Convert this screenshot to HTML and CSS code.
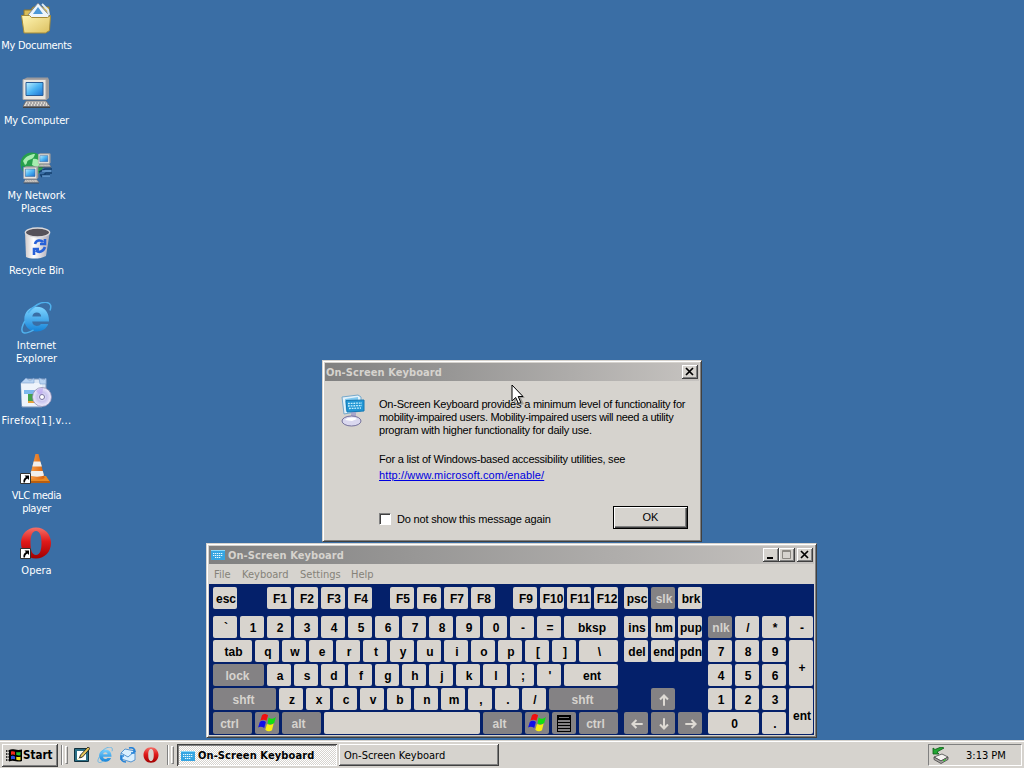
FILE: index.html
```html
<!DOCTYPE html>
<html lang="en">
<head>
<meta charset="utf-8">
<title>Desktop</title>
<link rel="stylesheet" href="styles.css">
</head>
<body>
<svg width="0" height="0" class="defs" aria-hidden="true">
  <defs>
    <linearGradient id="folder" x1="0" y1="0" x2="1" y2="1"><stop offset="0" stop-color="#fff6b4"/><stop offset="1" stop-color="#dcc060"/></linearGradient>
    <linearGradient id="screen" x1="0" y1="0" x2="1" y2="1"><stop offset="0" stop-color="#bff0ff"/><stop offset=".5" stop-color="#4cb4f4"/><stop offset="1" stop-color="#1c6fd0"/></linearGradient>
    <linearGradient id="bin" x1="0" x2="1"><stop offset="0" stop-color="#cfc8c8"/><stop offset=".35" stop-color="#ffffff"/><stop offset="1" stop-color="#a9a6b4"/></linearGradient>
    <linearGradient id="ie" x1="0" y1="0" x2="0" y2="1"><stop offset="0" stop-color="#7fd4ff"/><stop offset="1" stop-color="#1583d8"/></linearGradient>
    <linearGradient id="opera" x1="0" y1="0" x2="0" y2="1"><stop offset="0" stop-color="#f47068"/><stop offset=".45" stop-color="#e01a1a"/><stop offset="1" stop-color="#a00000"/></linearGradient>
    <linearGradient id="cone" x1="0" x2="1"><stop offset="0" stop-color="#f9a04a"/><stop offset="1" stop-color="#d8600a"/></linearGradient>
    <radialGradient id="disc"><stop offset="0" stop-color="#fff"/><stop offset=".5" stop-color="#c9c4ee"/><stop offset="1" stop-color="#f1eefc"/></radialGradient>
    <symbol id="i-ie" viewBox="0 0 32 32">
      <path d="M29 19.500H12.200c.3 2.900 2 4.400 4.600 4.400 1.900 0 3.300-.8 4.100-2h7.300C26.500 26.500 22.300 29.400 16.600 29.400 9.300 29.400 4.300 24.500 4.300 17.200S9.500 4.800 16.800 4.800c8 0 12.500 6 12.200 14.700zM12.300 14.500h8.900c-.3-2.600-1.900-4-4.400-4s-4.100 1.500-4.500 4z" fill="url(#ie)"/>
      <path d="M8 11c5-7 13-11.500 19-10.500 4 .8 4.500 4 3 8M5 19C.8 26 1 30.500 4.500 31c2.500.4 6-1.500 9-3" fill="none" stroke="#4fb0ec" stroke-width="1.500"/>
    </symbol>
    <symbol id="i-opera" viewBox="0 0 32 32">
      <path d="M16 .500C7 .500 1 7.500 1 16S7 31.500 16 31.500 31 24.500 31 16 25 .500 16 .500zm0 3.500c4 0 5.500 5 5.500 12S20 28 16 28 10.500 23 10.500 16 12 4 16 4z" fill="url(#opera)" fill-rule="evenodd"/>
    </symbol>
    <symbol id="i-pc" viewBox="0 0 32 32">
      <path d="M4 2l3-1.500h21L29 3v18l-2.500 2H4z" fill="#9c9a9c"/>
      <path d="M3 2.500h23v20H3z" fill="#e9e6e1" stroke="#aaa6a6"/>
      <path d="M6 5.500h17v13H6z" fill="url(#screen)" stroke="#2a5c96"/>
      <path d="M6 24h20l4 5.500H3z" fill="#dedad4" stroke="#6f6d70"/>
      <path d="M7 26h19M6 28h22" stroke="#77757a" stroke-dasharray="2 1"/>
      <path d="M3 30.500h27" stroke="#444"/>
    </symbol>
    <symbol id="i-osk" viewBox="0 0 14 12">
      <path d="M0 1h14v10H0z" fill="#36a5e2"/><path d="M0 1h14v1H0z" fill="#8ad8fa"/>
      <path d="M2 4.500h10M2 6.500h10M4 8.500h6" stroke="#e6faff" stroke-dasharray="1.300 .7"/>
    </symbol>
    <symbol id="i-flag" viewBox="0 0 18 18">
      <path d="M4.500 2c2-2 4-1 5.500 0L8.500 7C7 6 5 5.500 3 7z" fill="#f01010"/>
      <path d="M10.500 4c2 1.500 4 1.500 6.500-.5L15.500 9c-2 1.500-4 1.500-6 .5z" fill="#10e010"/>
      <path d="M2.500 8c2-1.500 4-1 5.500 0L6.500 13.500C5 12.500 3 12 1 13z" fill="#1010e8"/>
      <path d="M9 10c2 1 4 1 6-.5L13.500 15.500c-2 1.500-4 1-6-.5z" fill="#f8f010"/>
    </symbol>
    <symbol id="i-short" viewBox="0 0 11 11">
      <path d="M.5.500h10v10H.5z" fill="#fff" stroke="#333"/>
      <path d="M4.500 2.500H9V7L7.500 5.500C5.500 6.500 5 7.500 5 9.500H3.500C3 7 4 5 6 4z" fill="#000"/>
    </symbol>
    <symbol id="i-arrow" viewBox="0 0 14 14">
      <path d="M7 12V3M3.500 6.500L7 3l3.500 3.500" fill="none" stroke="#dedad4" stroke-width="1.800"/>
    </symbol>
  </defs>
</svg>

<main class="desktop">
  <div class="shortcuts">
    <div class="shortcut"><svg class="pic" viewBox="0 0 32 32">
      <path d="M4 8h7l2-3h16v20H4z" fill="#d9bd58" stroke="#91762a"/>
      <path d="M8 13L18 1l11 12v7H8z" fill="#eef5fb" stroke="#7b8794"/><path d="M13 12l5-7 5 7z" fill="#4c98d8"/><path d="M22 2l6 6 1 5" fill="none" stroke="#dce9f4" stroke-width="2"/>
      <path d="M1.500 13.500h8l2 2h16l3-2-1 15-4 2.500H4z" fill="url(#folder)" stroke="#a58b38"/></svg>
      <span class="l-docs">My Documents</span></div>
    <div class="shortcut"><svg class="pic"><use href="#i-pc"/></svg><span class="l-comp">My Computer</span></div>
    <div class="shortcut"><svg class="pic" viewBox="0 0 32 32">
      <circle cx="12" cy="12" r="11.500" fill="#27a04c"/><path d="M3 9c3-5 8-7 12-7-1 4-3 5-6 6s-1 4-4 5zM13 7c4-1 5 2 8 2l-3 7-6-3z" fill="#a6edb0"/><path d="M2 14l6 3-1 4-4-3z" fill="#1f62b8"/>
      <svg x="17" y="0" width="15" height="17"><use href="#i-pc"/></svg>
      <svg x="2" y="14" width="18" height="18"><use href="#i-pc"/></svg>
      <path d="M19 20l6-3h7M21 25l5-4h6M20 23h10" stroke="#15406f" stroke-width="1.500" fill="none"/><path d="M22 19h9M22 24h8" stroke="#7fb4e8"/></svg>
      <span class="l-net">My Network<br>Places</span></div>
    <div class="shortcut"><svg class="pic" viewBox="0 0 32 32">
      <path d="M5 5l1 25c5 2.500 15 2 20-1l4-25z" fill="url(#bin)"/>
      <ellipse cx="17.500" cy="5.500" rx="12.200" ry="4.500" fill="#56525a" stroke="#dcdadc" stroke-width="1.300"/>
      <path d="M15 17c1-4 6-4.500 8-2M25 12v5h-5M25 20c-2 5-6 6-9 3.500M14 28v-6h5" fill="none" stroke="#2761d8" stroke-width="2.600"/></svg>
      <span class="l-bin">Recycle Bin</span></div>
    <div class="shortcut"><svg class="pic"><use href="#i-ie"/></svg><span class="l-ie">Internet<br>Explorer</span></div>
    <div class="shortcut"><svg class="pic" viewBox="0 0 32 32">
      <path d="M1 6l5-4h20v24l-4 4H2z" fill="#dce8f6" stroke="#8199bb"/><path d="M1 6h21v23H2z" fill="#eef4fb"/><path d="M1 6l5-5 4 3 4-3v5zM19 1l5 2 2-2v6h-6z" fill="#b8d3f2" stroke="#7b9fcf" stroke-width=".6"/>
      <path d="M4 13h12v4H4z" fill="#7cb8ee"/><path d="M8 17h8v7H8z" fill="#44a24c"/><path d="M8 24h8v2H8z" fill="#e7a23a"/>
      <circle cx="22" cy="20" r="9.500" fill="url(#disc)" stroke="#8f8ab0" stroke-width=".8"/><path d="M22 20l-6-6a9 9 0 0 1 7-3z" fill="#bda8f0" opacity=".7"/><circle cx="22" cy="20" r="2.500" fill="#fff" stroke="#7772a0"/></svg>
      <span class="l-fox">Firefox[1].v...</span></div>
    <div class="shortcut"><svg class="pic" viewBox="0 0 32 32">
      <path d="M9 24h17l4 6H6z" fill="#e98b25"/><path d="M6 29h24v2H6z" fill="#b85e10"/>
      <path d="M15.500 2h3l6 24c-3 2-12 2-15 0z" fill="url(#cone)"/><path d="M13.700 9.500h6.700l1.500 5h-9.500zM11.300 19h11.500l1.200 4.500c-3 1.500-11 1.500-14 0z" fill="#f1efec"/>
      <svg x="0" y="21" width="11" height="11"><use href="#i-short"/></svg></svg>
      <span class="l-vlc">VLC media<br>player</span></div>
    <div class="shortcut"><svg class="pic" viewBox="0 0 32 32"><use href="#i-opera"/><svg x="0" y="21" width="11" height="11"><use href="#i-short"/></svg></svg>
      <span class="l-opera">Opera</span></div>
  </div>

  <section class="window dialog">
    <header class="titlebar"><span class="title">On-Screen Keyboard</span>
      <button class="cap"><svg viewBox="0 0 16 14"><path d="M4 3l7 7M11 3l-7 7" stroke="#000" stroke-width="1.700"/></svg></button></header>
    <div class="message">
      <svg class="dlg-icon" viewBox="0 0 32 34">
        <path d="M5 4l16-2 3 2v14l-17 3z" fill="#e4f2fa" stroke="#75a8cb"/><path d="M8 6l13-2v12l-12 2z" fill="#83c9ef"/>
        <path d="M14 19h5v7h-5z" fill="#aaa7cb"/><ellipse cx="14.500" cy="28" rx="9.500" ry="5" fill="#dad8ef" stroke="#74719c"/><path d="M8 27c3-3 9-3 12-1l-5 2z" fill="#fff"/>
        <path d="M9 7.500L27 7v11l-17 1z" fill="#2297d5" stroke="#1479b4"/><path d="M11 10.500l14-.5M11 13l14-.5M12 15.500l12-.5" stroke="#c8f1ff" stroke-width="1.300" stroke-dasharray="1.800 .9"/></svg>
      <div class="copy">
        <p><span class="d1">On-Screen Keyboard provides a minimum level of functionality for</span><br><span class="d2">mobility-impaired users. Mobility-impaired users will need a utility</span><br><span class="d3">program with higher functionality for daily use.</span></p>
        <p class="more"><span class="d4">For a list of Windows-based accessibility utilities, see</span></p>
        <a class="d5" href="#">http://www.microsoft.com/enable/</a>
      </div>
    </div>
    <div class="actions"><span class="box"></span><span class="d6">Do not show this message again</span><button class="ok">OK</button></div>
  </section>

  <section class="window osk">
    <header class="titlebar"><svg class="tiny"><use href="#i-osk"/></svg><span class="title">On-Screen Keyboard</span>
      <button class="cap"><svg viewBox="0 0 16 14"><path d="M4 10h6" stroke="#000" stroke-width="2"/></svg></button>
      <button class="cap"><svg viewBox="0 0 16 14"><path d="M3.500 2.500h8v8h-8zM3 3.500h9" stroke="#8b8882" fill="none"/></svg></button>
      <button class="cap last"><svg viewBox="0 0 16 14"><path d="M4 3l7 7M11 3l-7 7" stroke="#000" stroke-width="1.700"/></svg></button></header>
    <nav class="menu"><span class="m1">File</span><span class="m2">Keyboard</span><span class="m3">Settings</span><span class="m4">Help</span></nav>
    <div class="board">
      <div class="frow">
        <b class="key">esc</b><i class="sp27"></i><b class="key">F1</b><b class="key">F2</b><b class="key">F3</b><b class="key">F4</b><i class="sp15"></i><b class="key">F5</b><b class="key">F6</b><b class="key">F7</b><b class="key">F8</b><i class="sp15"></i><b class="key">F9</b><b class="key">F10</b><b class="key">F11</b><b class="key">F12</b><i class="sp3"></i><b class="key">psc</b><b class="key dark">slk</b><b class="key">brk</b>
      </div>
      <div class="blocks">
        <div class="letters">
          <div class="row"><b class="key">`</b><b class="key">1</b><b class="key">2</b><b class="key">3</b><b class="key">4</b><b class="key">5</b><b class="key">6</b><b class="key">7</b><b class="key">8</b><b class="key">9</b><b class="key">0</b><b class="key">-</b><b class="key">=</b><b class="key w54">bksp</b></div>
          <div class="row"><b class="key w39">tab</b><b class="key">q</b><b class="key">w</b><b class="key">e</b><b class="key">r</b><b class="key">t</b><b class="key">y</b><b class="key">u</b><b class="key">i</b><b class="key">o</b><b class="key">p</b><b class="key">[</b><b class="key">]</b><b class="key w39">\</b></div>
          <div class="row"><b class="key w51 dark">lock</b><b class="key">a</b><b class="key">s</b><b class="key">d</b><b class="key">f</b><b class="key">g</b><b class="key">h</b><b class="key">j</b><b class="key">k</b><b class="key">l</b><b class="key">;</b><b class="key">'</b><b class="key w54">ent</b></div>
          <div class="row"><b class="key w63 dark">shft</b><b class="key">z</b><b class="key">x</b><b class="key">c</b><b class="key">v</b><b class="key">b</b><b class="key">n</b><b class="key">m</b><b class="key">,</b><b class="key">.</b><b class="key">/</b><b class="key w69 dark">shft</b></div>
          <div class="row"><b class="key w39 dark mod">ctrl</b><b class="key dark win"><svg class="flag"><use href="#i-flag"/></svg></b><b class="key w39 dark mod">alt</b><b class="key w156"></b><b class="key w39 dark mod">alt</b><b class="key dark win"><svg class="flag"><use href="#i-flag"/></svg></b><b class="key dark win"><svg class="sheet" viewBox="0 0 14 17"><path d="M0 0h14v17H0z" fill="#000"/><path d="M2 2h10v1H2z" fill="#777"/><path d="M1 5h12v2H1zM1 8h12v2H1zM1 11h12v2H1zM1 14h12v2H1z" fill="#848284"/></svg></b><b class="key w39 dark mod">ctrl</b></div>
        </div>
        <div class="navkeys">
          <b class="key">ins</b><b class="key">hm</b><b class="key">pup</b>
          <b class="key">del</b><b class="key">end</b><b class="key">pdn</b>
          <b class="key dark up"><svg class="arr"><use href="#i-arrow"/></svg></b>
          <b class="key dark lo"><svg class="arr left"><use href="#i-arrow"/></svg></b><b class="key dark lo"><svg class="arr down"><use href="#i-arrow"/></svg></b><b class="key dark lo"><svg class="arr right"><use href="#i-arrow"/></svg></b>
        </div>
        <div class="numpad">
          <b class="key dark">nlk</b><b class="key">/</b><b class="key">*</b><b class="key">-</b>
          <b class="key">7</b><b class="key">8</b><b class="key">9</b><b class="key tall">+</b>
          <b class="key">4</b><b class="key">5</b><b class="key">6</b>
          <b class="key">1</b><b class="key">2</b><b class="key">3</b><b class="key tall">ent</b>
          <b class="key wide">0</b><b class="key">.</b>
        </div>
      </div>
    </div>
  </section>

  <svg class="pointer" viewBox="0 0 13 21"><path d="M3 3v16l4-4 3 6 3-1-3-6h4z" fill="#000" opacity=".25"/><path d="M1 1v16l3.700-3.500L7.500 19.500l2.300-1L7.200 12.500H12z" fill="#fff" stroke="#000"/></svg>
</main>

<footer class="taskbar">
  <button class="start"><svg class="logo" viewBox="0 0 17 15">
    <path d="M0 3h3M0 6h3M0 9h3M0 12h3" stroke="#000" stroke-width="1.500" stroke-dasharray="1 .6"/>
    <path d="M3 2c4-2 7 1 13-.5V13C11 15 8 11 3 13.500z" fill="#000"/><path d="M5 3.500c1.500-.6 3-.2 4 .2v3.200c-1-.5-2.500-.7-4 0z" fill="#f02a1a"/><path d="M10.300 4c1.500.4 3 .3 4.200 0v3.300c-1.500.4-3 .2-4.200-.2z" fill="#25bd35"/><path d="M5 8.200c1.500-.6 3-.3 4 .2v3c-1-.5-2.500-.6-4 0z" fill="#2a4fe0"/><path d="M10.300 8.700c1.500.4 3 .3 4.200 0V12c-1.500.4-3 .2-4.200-.2z" fill="#f4df20"/></svg><span>Start</span></button>
  <i class="etch"></i><i class="grip"></i>
  <div class="quick">
    <svg viewBox="0 0 16 16"><path d="M.5 1.500h14v13H.5z" fill="#2b6f86" stroke="#12303c"/><path d="M3 4h8l1 1v8H3z" fill="#fff"/><path d="M3 13l9-9" stroke="#e0d9a2"/><path d="M5.500 11l1-3L14 0l2 1.500L8.500 10z" fill="#e7c658" stroke="#222" stroke-width=".9"/></svg>
    <svg><use href="#i-ie"/></svg>
    <svg viewBox="0 0 16 16"><path d="M1 6l4-4 10 2v9l-4 2-10-3z" fill="#d9efff" stroke="#5795cf"/><path d="M1 6l7 4 7-6" fill="none" stroke="#5795cf"/><path d="M9 1c4-1 6 1 6 4M14 2v4h-3M6 15c-4 0-5-2-4-5M1 13V9h3" fill="none" stroke="#2181d8" stroke-width="1.600"/></svg>
    <svg><use href="#i-opera"/></svg>
  </div>
  <i class="etch"></i><i class="grip"></i>
  <div class="tasks">
    <button class="task active"><svg class="tiny"><use href="#i-osk"/></svg><span>On-Screen Keyboard</span></button>
    <button class="task"><span>On-Screen Keyboard</span></button>
  </div>
  <div class="tray"><svg viewBox="0 0 18 17"><path d="M2 10l8-3 6 3-7 4z" fill="#f4f3f0" stroke="#666"/><path d="M2 10v2.500l7 4 7-4V10l-7 4z" fill="#a7a5a3" stroke="#444" stroke-width=".8"/><path d="M1 7V1l2 1.500L9 0l3 1-7 4 2 2z" fill="#21a632" stroke="#0c5a18" stroke-width=".8"/><path d="M11 14l3-1.500" stroke="#2c2"/></svg><span>3:13 PM</span></div>
</footer>
</body>
</html>
```
FILE: styles.css
```css
* { box-sizing: border-box; }
html, body { height: 100%; }
body {
  margin: 0;
  display: flex;
  flex-direction: column;
  overflow: hidden;
  background: #3a6ea5;
  font: 11px/13px "DejaVu Sans Condensed", "DejaVu Sans", sans-serif;
  color: #000;
}
button { font: inherit; color: inherit; padding: 0; margin: 0; border: 0; background: #d6d3ce; border-radius: 0; }
svg { display: block; flex: none; }
.defs { position: absolute; }
.desktop { position: relative; height: 740px; flex: none; }

.shortcuts { display: flex; flex-direction: column; width: 73px; padding-top: 2px; }
.shortcut { height: 75px; display: flex; flex-direction: column; align-items: center; gap: 5px; color: #fff; text-align: center; white-space: nowrap; }
.pic { width: 32px; height: 32px; margin-right: 1px; }
.l-docs { letter-spacing: -.3px; }
.l-comp { letter-spacing: -.15px; }
.l-net { letter-spacing: -.1px; }
.l-bin { letter-spacing: -.2px; }
.l-fox { letter-spacing: .4px; }
.l-vlc { letter-spacing: -.4px; }

.window {
  position: absolute;
  background: #d6d3ce;
  border: 1px solid;
  border-color: #d6d3ce #404040 #404040 #d6d3ce;
  box-shadow: inset 1px 1px #fff, inset -1px -1px #808080;
}
.dialog { left: 322px; top: 360px; width: 380px; height: 182px; padding: 2px; }
.osk { left: 206px; top: 543px; width: 611px; height: 195px; padding: 2px; }
.titlebar {
  height: 18px; display: flex; align-items: center; padding: 0 1px;
  background: linear-gradient(90deg, #808080, #c6c3c0);
  color: #d6d3ce; font-weight: bold;
}
.title { flex: 1; white-space: nowrap; letter-spacing: .08px; }
.tiny { width: 14px; height: 12px; }
.osk .tiny { margin: 0 3px 0 1px; }
.cap { width: 16px; height: 14px; }
.cap svg { width: 16px; height: 14px; }
.cap, .start, .task {
  box-shadow: inset -1px -1px #404040, inset 1px 1px #fff, inset -2px -2px #808080;
}
.cap.last { margin-left: 2px; }

.dialog { font-family: "Liberation Sans", sans-serif; }
.dialog .title { font-family: "DejaVu Sans Condensed", "DejaVu Sans", sans-serif; }
.message { display: flex; height: 125px; padding: 12px 0 0 12px; }
.dlg-icon { width: 32px; height: 34px; }
.copy { padding: 5px 0 0 10px; white-space: nowrap; }
.copy p { margin: 0; }
.copy .more { margin: 16px 0 3px; }
.copy a { color: #0000e0; }
.d1 { letter-spacing: -.21px; }
.d2 { letter-spacing: -.31px; }
.d3 { letter-spacing: -.23px; }
.d4 { letter-spacing: -.21px; }
.d5 { letter-spacing: .12px; }
.actions { display: flex; align-items: center; height: 23px; padding-left: 54px; }
.box { width: 12px; height: 12px; margin-top: 3px; background: #fff; border: 1px solid; border-color: #808080 #fff #fff #808080; box-shadow: inset 1px 1px #404040; }
.d6 { margin: 3px 0 0 6px; flex: 1; white-space: nowrap; letter-spacing: -.18px; }
.ok { width: 75px; height: 23px; margin-right: 11px; border: 1px solid #000; box-shadow: inset 1px 1px #fff, inset -1px -1px #404040, inset -2px -2px #808080; }

.menu { height: 20px; display: flex; align-items: center; padding-left: 5px; color: #858279; }
.menu span { white-space: nowrap; }
.m1 { width: 28px; } .m2 { width: 58px; } .m3 { width: 51px; }

.board { background: #04206a; height: 151px; padding: 3px 2px 2px 4px; font: bold 12px/22px "Liberation Sans", sans-serif; }
.frow, .row { display: flex; gap: 3px; height: 22px; }
.frow { margin-bottom: 7px; }
.frow i { margin-right: -3px; flex: none; }
.sp27 { width: 27px; } .sp15 { width: 15px; } .sp3 { width: 3px; }
.blocks { display: flex; gap: 6px; }
.letters { display: grid; grid-auto-rows: 22px; gap: 2px; width: 405px; }
.key {
  width: 24px; height: 22px; flex: none;
  border-radius: 2px; background: #d8d4ce;
  display: flex; align-items: center; justify-content: center;
  padding: 2px 0 0 2px; overflow: hidden; white-space: nowrap;
}
.dark { background: #848284; color: #d6d3ce; }
.w39 { width: 39px; } .w51 { width: 51px; } .w54 { width: 54px; } .w63 { width: 63px; } .w69 { width: 69px; } .w156 { width: 156px; }
.w51, .w63, .w69 { padding-left: 0; padding-right: 2px; }
.mod { padding-left: 0; padding-right: 6px; }
.win { padding: 0; }
.flag { width: 20px; height: 20px; }
.sheet { width: 14px; height: 17px; }
.arr { width: 16px; height: 16px; }
.left { transform: rotate(-90deg); } .right { transform: rotate(90deg); } .down { transform: rotate(180deg); }
.navkeys { display: grid; grid-template-columns: repeat(3, 24px); grid-auto-rows: 22px; gap: 2px 3px; }
.navkeys .up { grid-area: 4 / 2; }
.navkeys .lo { grid-row: 5; }
.numpad { display: grid; grid-template-columns: repeat(4, 24px); grid-auto-rows: 22px; gap: 2px 3px; }
.tall { grid-row: span 2; height: 46px; padding-top: 10px; }
.wide { grid-column: span 2; width: 51px; }

.pointer { position: absolute; left: 511px; top: 384px; width: 13px; height: 21px; overflow: visible; }

.taskbar {
  height: 28px; flex: none; display: flex; align-items: center;
  background: #d6d3ce; box-shadow: inset 0 1px #d6d3ce, inset 0 2px #fff;
  padding: 2px 2px 0;
}
.start { width: 56px; height: 23px; display: flex; align-items: center; gap: 0; padding-left: 4px; font-weight: bold; font-size: 11.5px; }
.logo { width: 17px; height: 15px; }
.etch { width: 2px; height: 20px; margin-left: 3px; border-left: 1px solid #808080; border-right: 1px solid #fff; }
.grip { width: 3px; height: 18px; margin-left: 2px; border: 1px solid; border-color: #fff #808080 #808080 #fff; }
.quick { display: flex; gap: 7px; margin: 0 5px 0 6px; }
.quick svg { width: 16px; height: 16px; }
.tasks { display: flex; gap: 2px; margin-left: 3px; }
.task { width: 160px; height: 22px; display: flex; align-items: center; padding-left: 5px; white-space: nowrap; }
.task .tiny { margin: 0 3px 0 -1px; }
.active {
  font-weight: bold; padding-top: 1px; letter-spacing: .1px;
  background: repeating-conic-gradient(#fff 0 25%, #d6d3ce 0 50%) 0 0 / 2px 2px;
  box-shadow: inset 1px 1px #404040, inset -1px -1px #fff, inset 2px 2px #808080;
}
.tray { margin-left: auto; width: 94px; height: 22px; display: flex; align-items: center; gap: 16px; padding-left: 3px; border: 1px solid; border-color: #808080 #fff #fff #808080; white-space: nowrap; }
.tray svg { width: 18px; height: 17px; }
```
